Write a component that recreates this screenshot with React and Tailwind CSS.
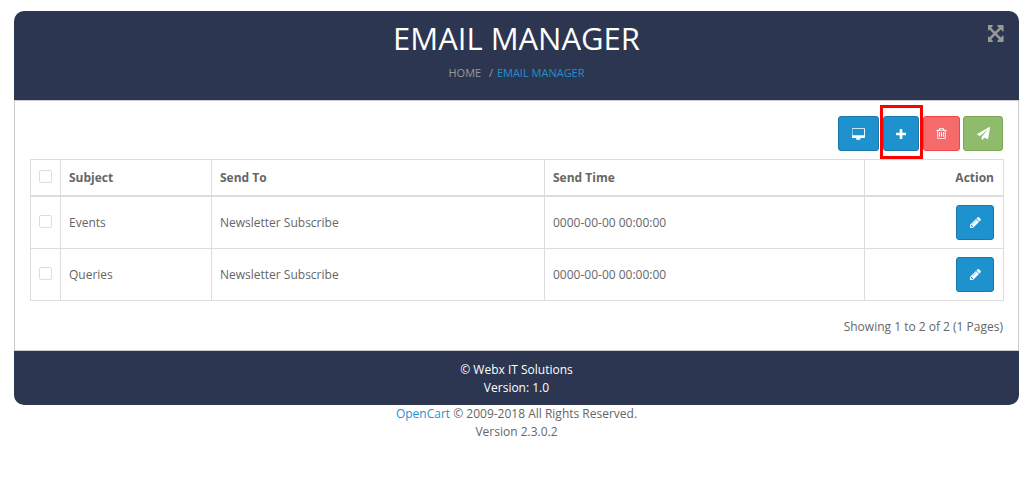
const rows = [
  { id: 1, subject: 'Events', sendTo: 'Newsletter Subscribe', time: '0000-00-00 00:00:00', height: 'h-[53px]', pad: 'pt-[2px]' },
  { id: 2, subject: 'Queries', sendTo: 'Newsletter Subscribe', time: '0000-00-00 00:00:00', height: 'h-[52px]', pad: '' },
];

function Icon({ box, d, className }) {
  return (
    <svg viewBox={box} className={className} fill="currentColor">
      <path d={d} />
    </svg>
  );
}

const icons = {
  expand: 'M1283 541l-355 355 355 355 144-144q29-31 70-14 39 17 39 59v448q0 26-19 45t-45 19h-448q-42 0-59-40-17-39 14-69l144-144-355-355-355 355 144 144q31 30 14 69-17 40-59 40h-448q-26 0-45-19t-19-45v-448q0-42 40-59 39-17 69 14l144 144 355-355-355-355-144 144q-19 19-45 19-12 0-24-5-40-17-40-59v-448q0-26 19-45t45-19h448q42 0 59 40 17 39-14 69l-144 144 355 355 355-355-144-144q-31-30-14-69 17-40 59-40h448q26 0 45 19t19 45v448q0 42-39 59-13 5-25 5-26 0-45-19z',
  desktop: 'M1728 992v-832q0-13-9.500-22.500t-22.500-9.500h-1600q-13 0-22.500 9.500t-9.500 22.500v832q0 13 9.500 22.500t22.500 9.500h1600q13 0 22.500-9.500t9.500-22.500zm128-832v1088q0 66-47 113t-113 47h-544q0 37 16 77.500t32 71 16 43.500q0 26-19 45t-45 19h-512q-26 0-45-19t-19-45q0-14 16-44t32-70 16-78h-544q-66 0-113-47t-47-113v-1088q0-66 47-113t113-47h1632q66 0 113 47t47 113z',
  plus: 'M1600 736v192q0 40-28 68t-68 28h-416v416q0 40-28 68t-68 28h-192q-40 0-68-28t-28-68v-416h-416q-40 0-68-28t-28-68v-192q0-40 28-68t68-28h416v-416q0-40 28-68t68-28h192q40 0 68 28t28 68v416h416q40 0 68 28t28 68z',
  trash: 'M704 736v576q0 14-9 23t-23 9h-64q-14 0-23-9t-9-23v-576q0-14 9-23t23-9h64q14 0 23 9t9 23zm256 0v576q0 14-9 23t-23 9h-64q-14 0-23-9t-9-23v-576q0-14 9-23t23-9h64q14 0 23 9t9 23zm256 0v576q0 14-9 23t-23 9h-64q-14 0-23-9t-9-23v-576q0-14 9-23t23-9h64q14 0 23 9t9 23zm128 724v-948h-896v948q0 22 7 40.500t14.500 27 10.500 8.500h832q3 0 10.500-8.500t14.500-27 7-40.500zm-672-1076h448l-48-117q-7-9-17-11h-317q-10 2-17 11zm928 32v64q0 14-9 23t-23 9h-96v948q0 83-47 143.500t-113 60.500h-832q-66 0-113-58.500t-47-141.500v-952h-96q-14 0-23-9t-9-23v-64q0-14 9-23t23-9h309l70-167q15-37 54-63t79-26h320q40 0 79 26t54 63l70 167h309q14 0 23 9t9 23z',
  plane: 'M1764 11q33 24 27 64l-256 1536q-5 29-32 45-14 8-31 8-11 0-24-5l-453-185-242 295q-18 23-49 23-13 0-22-4-19-7-30.500-23.500t-11.500-36.500v-349l864-1059-1069 925-395-162q-37-14-40-55-2-40 32-59l1664-960q15-9 32-9 20 0 36 11z',
  pencil: 'M491 1536l91-91-235-235-91 91v107h128v128h107zm523-928q0-22-22-22-10 0-17 7l-542 542q-7 7-7 17 0 22 22 22 10 0 17-7l542-542q7-7 7-17zm-54-192l416 416-832 832h-416v-416zm683 96q0 53-37 90l-166 166-416-416 166-165q36-38 90-38 53 0 91 38l235 234q37 39 37 91z',
};

function Checkbox() {
  return <span className="block w-[13px] h-[13px] mb-[2px] bg-white border border-[#ddd] rounded-[2px]" />;
}

export default function App() {
  return (
    <div className="min-h-[503px] bg-white text-[12px] leading-[18px] text-[#666] font-['Open_Sans',sans-serif]">
      <div className="pt-[11px] pl-[14px] pr-[15px]">
        <div className="relative h-[89px] bg-[#2c3650] rounded-t-[10px] flex flex-col items-center">
          <h1 className="mt-[7px] text-[31px] leading-[40px] text-white">EMAIL MANAGER</h1>
          <div className="mt-[6px] text-[11px] leading-[18px] text-[#999]">
            HOME <span className="ml-[5px]">/</span> <span className="ml-[1px] text-[#1e91cf]">EMAIL MANAGER</span>
          </div>
          <Icon box="128 128 1536 1536" d={icons.expand} className="absolute top-[14px] right-[14px] w-[17px] h-[17px] text-[#999]" />
        </div>

        <div className="h-[251px] border border-[#ccc] bg-white px-[15px] pt-[15px]">
          <div className="flex justify-end h-[35px]">
            <button className="w-[41px] h-[35px] flex items-center justify-center bg-[#1e91cf] border border-[#1978ab] rounded-[3px] text-white">
              <Icon box="0 0 1856 1664" d={icons.desktop} className="w-[13px] h-[12px]" />
            </button>
            <div className="relative ml-[4px]">
              <button className="w-[36px] h-[35px] flex items-center justify-center bg-[#1e91cf] border border-[#1978ab] rounded-[3px] text-white">
                <Icon box="192 128 1408 1408" d={icons.plus} className="w-[10px] h-[10px]" />
              </button>
              <div className="absolute -top-[11px] -left-[3px] w-[43px] h-[54px] border-[3px] border-[#f00]" />
            </div>
            <button className="ml-[4px] w-[37px] h-[35px] flex items-center justify-center bg-[#f56b6b] border border-[#f24545] rounded-[3px] text-white">
              <Icon box="0 0 1792 1792" d={icons.trash} className="w-[13px] h-[13px]" />
            </button>
            <button className="ml-[3px] w-[40px] h-[35px] flex items-center justify-center bg-[#8fbb6c] border border-[#7aa856] rounded-[3px] text-white">
              <Icon box="0 0 1792 1792" d={icons.plane} className="w-[13px] h-[13px]" />
            </button>
          </div>

          <table className="mt-[8px] w-[973px] table-fixed border-collapse border border-[#ddd]">
            <colgroup>
              <col className="w-[30px]" />
              <col className="w-[151px]" />
              <col className="w-[333px]" />
              <col className="w-[320px]" />
              <col className="w-[139px]" />
            </colgroup>
            <thead>
              <tr className="h-[36px] border-b-2 border-[#ddd] font-bold">
                <td className="border-r border-[#ddd] px-[8px]"><Checkbox /></td>
                <td className="border-r border-[#ddd] px-[8px] pt-[2px]">Subject</td>
                <td className="border-r border-[#ddd] px-[8px] pt-[2px]">Send To</td>
                <td className="border-r border-[#ddd] px-[8px] pt-[2px]">Send Time</td>
                <td className="pl-[8px] pr-[9px] pt-[2px] text-right">Action</td>
              </tr>
            </thead>
            <tbody>
              {rows.map(r => (
                <tr key={r.id} className={`${r.height} border-b border-[#ddd]`}>
                  <td className="border-r border-[#ddd] px-[8px]"><Checkbox /></td>
                  <td className={`border-r border-[#ddd] px-[8px] ${r.pad}`}>{r.subject}</td>
                  <td className={`border-r border-[#ddd] px-[8px] ${r.pad}`}>{r.sendTo}</td>
                  <td className={`border-r border-[#ddd] px-[8px] ${r.pad}`}>{r.time}</td>
                  <td className="pl-[8px] pr-[9px]">
                    <div className="flex justify-end">
                      <button className="w-[38px] h-[35px] flex items-center justify-center bg-[#1e91cf] border border-[#1978ab] rounded-[3px] text-white">
                        <Icon box="0 0 1792 1792" d={icons.pencil} className="w-[13px] h-[13px]" />
                      </button>
                    </div>
                  </td>
                </tr>
              ))}
            </tbody>
          </table>

          <div className="mt-[17px] text-right">Showing 1 to 2 of 2 (1 Pages)</div>
        </div>

        <div className="h-[54px] bg-[#2c3650] rounded-b-[10px] pt-[10px] text-center text-white">
          <div>© Webx IT Solutions</div>
          <div>Version: 1.0</div>
        </div>
      </div>

      <div className="pl-[14px] pr-[15px] text-center">
        <div>
          <span className="text-[#1e91cf]">OpenCart</span> © 2009-2018 All Rights Reserved.
        </div>
        <div>Version 2.3.0.2</div>
      </div>
    </div>
  );
}
